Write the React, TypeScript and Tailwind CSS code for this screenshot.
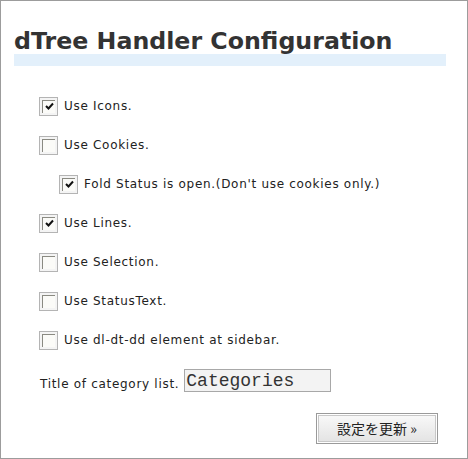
import { ReactNode } from 'react';

// ─── Classic bevelled checkbox ────────────────────────────────────────────────
function Box({ checked }: { checked?: boolean }) {
  return (
    <span className="w-[19px] h-[19px] shrink-0 border border-[#b4b4b4] bg-[#f4f4f4] p-[2px] flex">
      <span className="flex-1 flex items-center justify-center border-t border-l border-[#8a8a82] border-b-[#f0f0ec] border-r-[#f0f0ec] bg-[#fbfbf8]">
        {checked && (
          <svg width="9" height="9" viewBox="0 0 9 9">
            <path d="M1 4 L3.5 6.5 L8 1.5" fill="none" stroke="#111" strokeWidth="2" />
          </svg>
        )}
      </span>
    </span>
  );
}

function Row({ checked, indent, children }: { checked?: boolean; indent?: boolean; children: ReactNode }) {
  return (
    <label className={`flex items-center h-[20px] gap-[6px] ${indent ? 'ml-[20px]' : ''}`}>
      <Box checked={checked} />
      <span>{children}</span>
    </label>
  );
}

export default function App() {
  return (
    <div
      className="w-[468px] h-[459px] border border-[#9c9c9c] bg-white text-[12px] tracking-[0.7px] text-[#222]"
      style={{ fontFamily: '"DejaVu Sans", Verdana, sans-serif' }}
    >
      <h2 className="mt-[28px] ml-[13px] mr-[21px] h-[37px] border-b-[12px] border-[#e3f0fb] text-[23.7px] leading-[25px] tracking-normal font-bold text-[#333]">
        dTree Handler Configuration
      </h2>

      <div className="mt-[30px] ml-[38px] flex flex-col gap-[19px]">
        <Row checked>Use Icons.</Row>
        <Row>Use Cookies.</Row>
        <Row checked indent>Fold Status is open.(Don't use cookies only.)</Row>
        <Row checked>Use Lines.</Row>
        <Row>Use Selection.</Row>
        <Row>Use StatusText.</Row>
        <Row>Use dl-dt-dd element at sidebar.</Row>
      </div>

      <div className="mt-[18px] ml-[39px] flex items-center gap-[5px]">
        <span className="mt-[7px]">Title of category list.</span>
        <input
          defaultValue="Categories"
          className="w-[147px] h-[23px] border border-[#a8a8a8] bg-[#f3f3f3] px-[1px] text-[18px] leading-[20px] tracking-normal text-[#333] outline-none"
          style={{ fontFamily: '"Liberation Mono", "Courier New", monospace' }}
        />
      </div>

      <div className="mt-[20px] mr-[29px] flex justify-end">
        <button
          className="w-[122px] h-[31px] border border-[#9a9a9a] p-[1px] bg-white tracking-normal"
          style={{ fontFamily: '"Noto Sans CJK JP", sans-serif' }}
        >
          <span className="h-full flex items-center justify-center border border-[#c8c8c8] bg-gradient-to-b from-[#f8f8f8] to-[#e4e4e4] text-[14px] text-[#222]">
            設定を更新 »
          </span>
        </button>
      </div>
    </div>
  );
}
